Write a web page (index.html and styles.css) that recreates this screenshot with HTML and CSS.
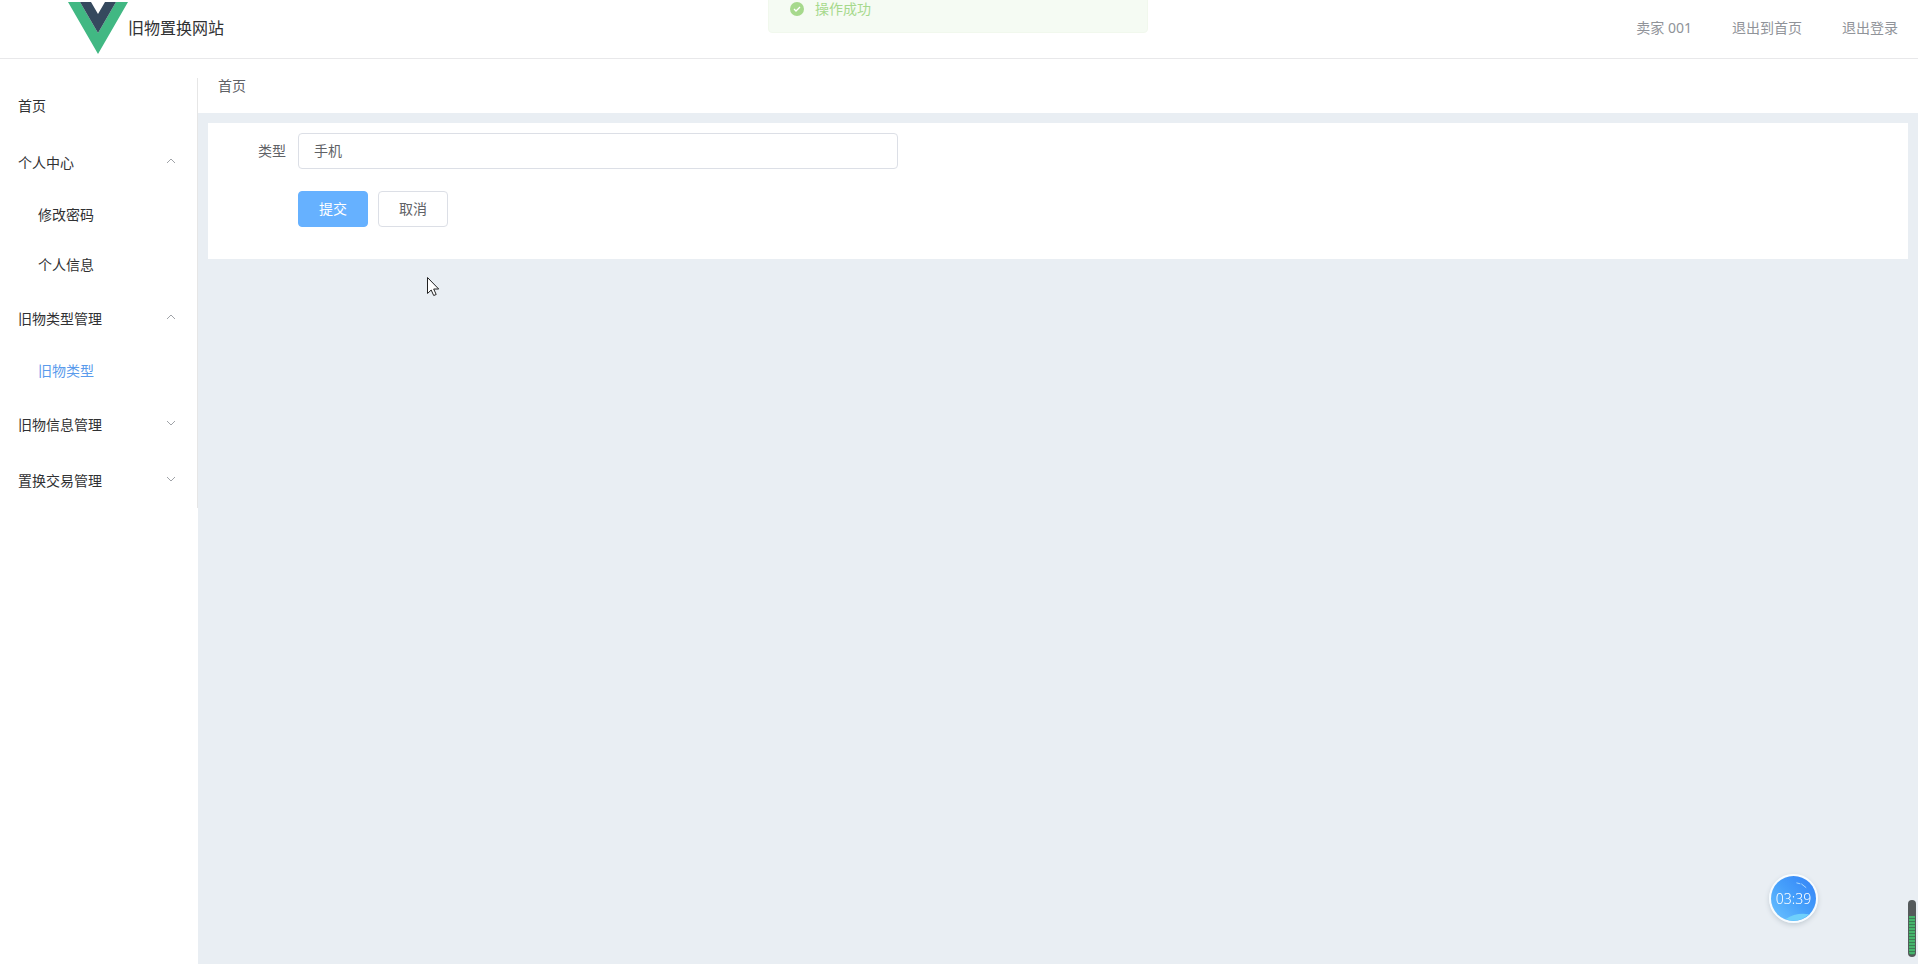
FILE: index.html
```html
<!DOCTYPE html>
<html lang="zh-CN">
<head>
<meta charset="utf-8">
<title>旧物置换网站</title>
<link rel="stylesheet" href="styles.css">
</head>
<body>
<header class="header">
  <a class="brand" href="#">
    <svg class="brand-logo" viewBox="0 0 60 52" aria-hidden="true">
      <path fill="#41b883" d="M0 0h12l18 31L48 0h12L30 52z"/>
      <path fill="#35495e" d="M12 0h11l7 12 7-12h11L30 31z"/>
    </svg>
    <span>旧物置换网站</span>
  </a>
  <nav class="user-nav">
    <span>卖家 001</span>
    <a href="#">退出到首页</a>
    <a href="#">退出登录</a>
  </nav>
</header>

<div class="layout">
  <aside class="sidebar">
    <nav class="menu">
      <a class="menu-item" href="#">首页</a>
      <button class="menu-item menu-group" type="button" aria-expanded="true">个人中心
        <svg class="arrow" viewBox="0 0 10 6" aria-hidden="true"><path d="M1 5l4-4 4 4"/></svg>
      </button>
      <a class="menu-sub" href="#">修改密码</a>
      <a class="menu-sub" href="#">个人信息</a>
      <button class="menu-item menu-group" type="button" aria-expanded="true">旧物类型管理
        <svg class="arrow" viewBox="0 0 10 6" aria-hidden="true"><path d="M1 5l4-4 4 4"/></svg>
      </button>
      <a class="menu-sub active" href="#">旧物类型</a>
      <button class="menu-item menu-group" type="button" aria-expanded="false">旧物信息管理
        <svg class="arrow" viewBox="0 0 10 6" aria-hidden="true"><path d="M1 1l4 4 4-4"/></svg>
      </button>
      <button class="menu-item menu-group" type="button" aria-expanded="false">置换交易管理
        <svg class="arrow" viewBox="0 0 10 6" aria-hidden="true"><path d="M1 1l4 4 4-4"/></svg>
      </button>
    </nav>
  </aside>
  <main class="main">
    <nav class="breadcrumb"><a href="#">首页</a></nav>
    <form class="card">
      <div class="form-row">
        <label class="form-label" for="type">类型</label>
        <input class="form-input" id="type" type="text" value="手机">
      </div>
      <div class="form-actions">
        <button class="btn btn-primary" type="button">提交</button>
        <button class="btn" type="button">取消</button>
      </div>
    </form>
  </main>
</div>

<div class="message" role="alert">
  <svg class="message-icon" viewBox="0 0 14 14" aria-hidden="true">
    <circle cx="7" cy="7" r="7" fill="#a6d98c"/>
    <path d="M4 7l2 2 4-4" fill="none" stroke="#fff" stroke-width="1.3"/>
  </svg>
  <span>操作成功</span>
</div>

<div class="timer">
  <svg class="timer-art" viewBox="0 0 46 46" aria-hidden="true">
    <defs>
      <linearGradient id="ball" x1="0" y1="1" x2="1" y2="0">
        <stop offset="0" stop-color="#6cc4ff"/>
        <stop offset=".5" stop-color="#46a0fb"/>
        <stop offset="1" stop-color="#3381f6"/>
      </linearGradient>
    </defs>
    <circle cx="23" cy="23" r="23" fill="url(#ball)"/>
    <path d="M15 44Q25 37 39 39Q28 49 15 44z" fill="#6fd0fb"/>
    <path d="M26 7l4 1M31 8l5 4" stroke="#a9d8ff" fill="none"/>
  </svg>
  <span class="timer-text">03:39</span>
</div>
<div class="level"><div class="level-fill"></div></div>
<svg class="cursor" viewBox="0 0 13 20" aria-hidden="true">
  <path d="M.5.5v16l3.700-3.500 2.500 5.500 2.500-1-2.500-5.500h5z" fill="#fff" stroke="#222"/>
</svg>
</body>
</html>
```

FILE: styles.css
```css
* {
  box-sizing: border-box;
}

body {
  margin: 0;
  min-height: 100vh;
  display: flex;
  flex-direction: column;
  background: #fff;
  color: #303133;
  font: 14px/20px "Noto Sans", "Noto Sans CJK SC", sans-serif;
}

a {
  color: inherit;
  text-decoration: none;
}

button,
input {
  font: inherit;
}

.header {
  height: 59px;
  display: flex;
  align-items: center;
  justify-content: space-between;
  padding: 0 20px 2px 68px;
  border-bottom: 1px solid #e8e8ea;
}

.brand {
  display: flex;
  align-items: center;
  font-size: 16px;
}

.brand-logo {
  width: 60px;
  height: 52px;
}

.user-nav {
  display: flex;
  gap: 40px;
  color: #909399;
}

.layout {
  flex: 1;
  display: flex;
}

.sidebar {
  width: 198px;
  flex: none;
  padding-top: 19px;
}

.menu {
  display: flex;
  flex-direction: column;
  border-right: 1px solid #e6e6e6;
}

.menu-item,
.menu-sub {
  display: flex;
  align-items: center;
  justify-content: space-between;
  text-align: left;
}

.menu-item {
  height: 56px;
  padding: 0 21px 0 18px;
  border: 0;
  background: none;
  color: #303133;
}

.menu-group {
  padding-top: 2px;
}

.menu-sub {
  height: 50px;
  padding-left: 38px;
}

.menu-sub.active {
  color: #5a9bec;
}

.arrow {
  width: 10px;
  height: 6px;
  margin-bottom: 4px;
  fill: none;
  stroke: #a0a3a8;
}

.main {
  flex: 1;
  background: #e9eef3;
}

.breadcrumb {
  height: 54px;
  display: flex;
  align-items: center;
  padding-left: 20px;
  background: #fff;
  color: #606266;
}

.card {
  margin: 10px;
  padding: 10px 10px 32px;
  background: #fff;
  color: #606266;
}

.form-row {
  display: flex;
  align-items: center;
  margin-bottom: 22px;
}

.form-label {
  width: 80px;
  padding-right: 12px;
  text-align: right;
}

.form-input {
  width: 600px;
  height: 36px;
  padding: 0 15px 2px;
  border: 1px solid #dcdfe6;
  border-radius: 4px;
  background: #fff;
  color: #606266;
}

.form-actions {
  display: flex;
  gap: 10px;
  padding-left: 80px;
}

.btn {
  width: 70px;
  height: 36px;
  padding: 0;
  border: 1px solid #dcdfe6;
  border-radius: 4px;
  background: #fff;
  color: #606266;
}

.btn-primary {
  border-color: #66b1ff;
  background: #66b1ff;
  color: #fff;
}

.message {
  position: fixed;
  top: -15px;
  left: 0;
  right: 2px;
  width: 380px;
  height: 48px;
  margin: 0 auto;
  display: flex;
  align-items: center;
  gap: 11px;
  padding-left: 21px;
  border: 1px solid #f1f8ed;
  border-radius: 4px;
  background: #f5fbf3;
  color: #a6d98c;
}

.message-icon {
  width: 14px;
  height: 14px;
}

.timer {
  position: fixed;
  right: 100px;
  bottom: 41px;
  width: 49px;
  height: 49px;
  border: 2px solid #f7fcff;
  border-radius: 50%;
  display: grid;
  place-items: center;
  box-shadow: 0 2px 5px #c5ced6;
  color: #fff;
}

.timer-art,
.timer-text {
  grid-area: 1 / 1;
}

.timer-art {
  width: 45px;
  height: 45px;
}

.timer-text {
  font-weight: 300;
}

.level {
  position: fixed;
  right: 2px;
  bottom: 7px;
  width: 8px;
  height: 57px;
  padding: 16px 1px 2px;
  border-radius: 4px;
  background: #555a5b;
}

.level-fill {
  height: 100%;
  border-radius: 0 0 3px 3px;
  background: repeating-linear-gradient(#45b56c 0 2px, #3b7f54 2px 3px);
}

.cursor {
  position: fixed;
  top: 277px;
  left: 427px;
  width: 13px;
  height: 20px;
}
```
